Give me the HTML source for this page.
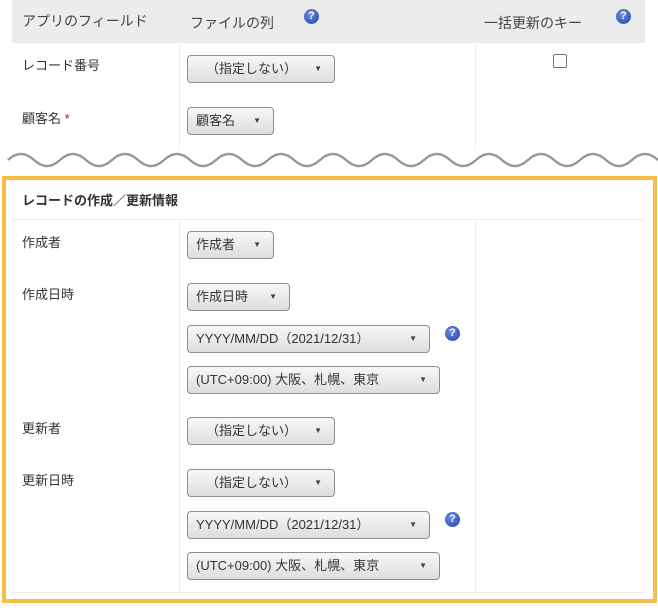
<!DOCTYPE html>
<html><head><meta charset="utf-8"><style>
body{margin:0;width:658px;height:611px;background:#fff;position:relative;overflow:hidden;font-family:"Liberation Sans","Noto Sans CJK JP",sans-serif;font-size:13px;color:#333}
.a{position:absolute}
.sel{position:absolute;height:28px;border:1px solid #8e8e8e;border-radius:4px;background:linear-gradient(#f8f8f8,#dedede);box-sizing:border-box;font-size:13px;line-height:26px;padding-left:8px;color:#333;white-space:nowrap}
.sel:after{content:"▼";position:absolute;right:12px;top:0;font-size:8px;color:#444}
.q{position:absolute;width:15px;height:15px;border-radius:50%;background:radial-gradient(circle at 40% 35%,#6d8fe0,#1d3fa8);color:#fff;font-size:11px;font-weight:bold;text-align:center;line-height:15px}
.vl{position:absolute;width:1px;background:#eee}
.lbl{position:absolute;left:22px;font-size:13px}
</style></head><body>
<div class="a" style="left:12px;top:0;width:633px;height:43px;background:#ececec"></div>
<div class="a" style="left:22px;top:11px;font-size:14px;color:#444">アプリのフィールド</div>
<div class="a" style="left:190px;top:13px;font-size:14px;color:#444">ファイルの列</div>
<div class="q" style="left:304px;top:9px">?</div>
<div class="a" style="left:484px;top:13px;font-size:14px;color:#444">一括更新のキー</div>
<div class="q" style="left:616px;top:9px">?</div>
<div class="vl" style="left:179px;top:0;height:150px"></div>
<div class="vl" style="left:475px;top:0;height:150px"></div>
<div class="lbl" style="top:55px">レコード番号</div>
<div class="sel" style="left:187px;top:55px;width:148px;padding-left:18px">（指定しない）</div>
<div class="a" style="left:553px;top:54px;width:12px;height:12px;border:1px solid #777;border-radius:2px;background:#fff"></div>
<div class="lbl" style="top:108px">顧客名 <span style="color:#d00">*</span></div>
<div class="sel" style="left:187px;top:107px;width:87px">顧客名</div>
<svg class="a" style="left:0;top:146px" width="658" height="26"><path d="M8 14 Q21 2 34 14 T60 14 T86 14 T112 14 T138 14 T164 14 T190 14 T216 14 T242 14 T268 14 T294 14 T320 14 T346 14 T372 14 T398 14 T424 14 T450 14 T476 14 T502 14 T528 14 T554 14 T580 14 T606 14 T632 14 T658 14" fill="none" stroke="#999" stroke-width="2.5"/></svg>
<div class="a" style="left:2px;top:176px;width:647px;height:419px;border:4px solid #f6be45"></div>
<div class="a" style="left:22px;top:190px;font-size:13px;font-weight:bold;color:#333">レコードの作成／更新情報</div>
<div class="a" style="left:12px;top:219px;width:633px;height:1px;background:#eee"></div>
<div class="a" style="left:12px;top:592px;width:633px;height:1px;background:#eee"></div>
<div class="vl" style="left:179px;top:220px;height:372px"></div>
<div class="vl" style="left:475px;top:220px;height:372px"></div>
<div class="lbl" style="top:232px">作成者</div>
<div class="sel" style="left:187px;top:231px;width:87px">作成者</div>
<div class="lbl" style="top:284px">作成日時</div>
<div class="sel" style="left:187px;top:283px;width:103px">作成日時</div>
<div class="sel" style="left:187px;top:325px;width:243px">YYYY/MM/DD（2021/12/31）</div>
<div class="q" style="left:445px;top:326px">?</div>
<div class="sel" style="left:187px;top:366px;width:253px">(UTC+09:00) 大阪、札幌、東京</div>
<div class="lbl" style="top:418px">更新者</div>
<div class="sel" style="left:187px;top:417px;width:148px;padding-left:18px">（指定しない）</div>
<div class="lbl" style="top:470px">更新日時</div>
<div class="sel" style="left:187px;top:469px;width:148px;padding-left:18px">（指定しない）</div>
<div class="sel" style="left:187px;top:511px;width:243px">YYYY/MM/DD（2021/12/31）</div>
<div class="q" style="left:445px;top:512px">?</div>
<div class="sel" style="left:187px;top:552px;width:253px">(UTC+09:00) 大阪、札幌、東京</div>
</body></html>
